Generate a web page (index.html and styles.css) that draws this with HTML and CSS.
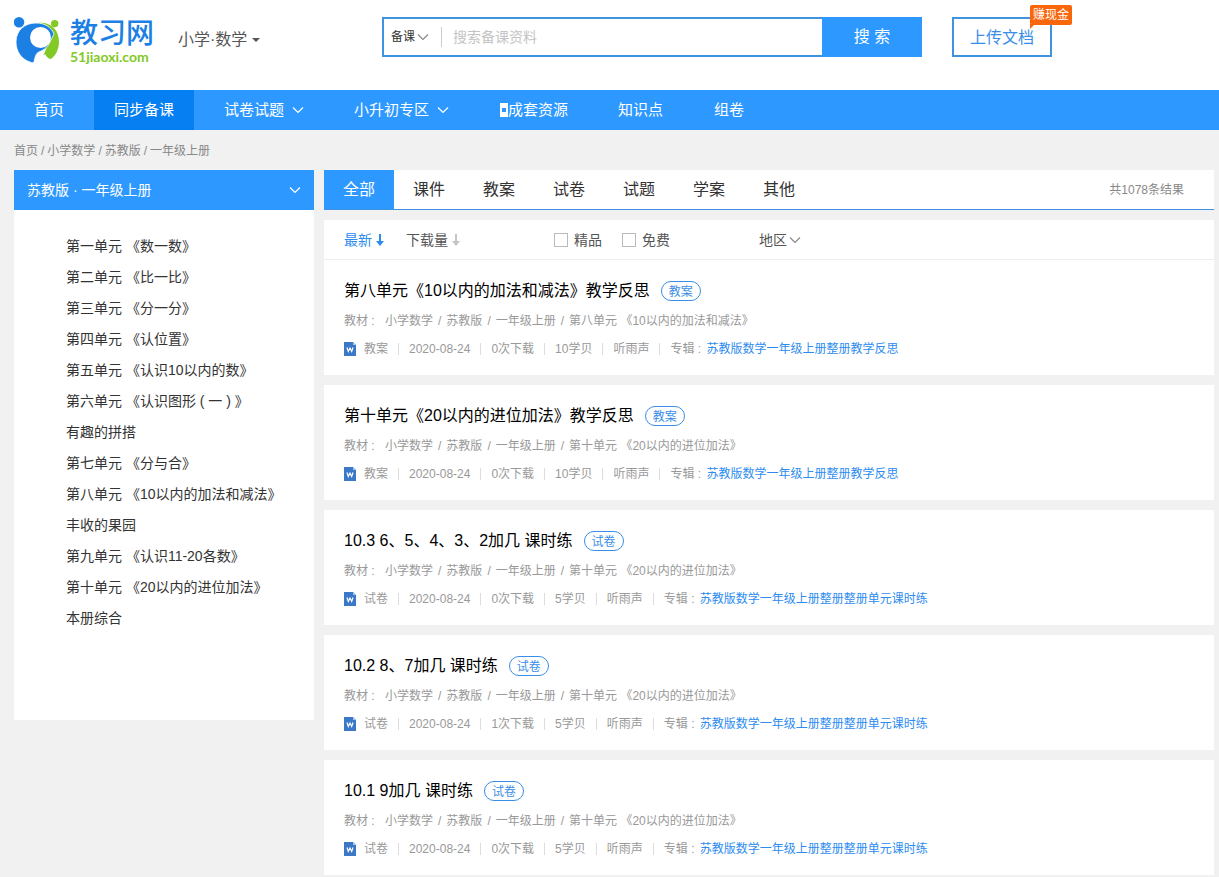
FILE: index.html
```html
<!DOCTYPE html>
<html lang="zh-CN">
<head>
<meta charset="utf-8">
<title>教习网 - 苏教版一年级上册</title>
<meta name="viewport" content="width=device-width, initial-scale=1">
<link rel="stylesheet" href="styles.css">
</head>
<body>
<svg class="defs" aria-hidden="true">
  <symbol id="chevron" viewBox="0 0 12 8"><path d="M1 1.5 6 6.5 11 1.5" fill="none" stroke="currentColor" stroke-width="1.2"/></symbol>
  <symbol id="arrow" viewBox="0 0 8 12"><path d="M3 0h2v7h3L4 12 0 7h3z" fill="currentColor"/></symbol>
  <symbol id="word" viewBox="0 0 12 14"><path d="M0 0h9l3 3v11H0z" fill="#3b78c8"/><path d="M9 0v3h3z" fill="#a9c8ee"/><path d="M3 5.500l1.300 4L6 6l1.700 3.500L9 5.500" fill="none" stroke="#fff" stroke-width="1.200"/></symbol>
</svg>
<header class="header">
  <a class="logo" href="#">
    <svg class="logo-mark" viewBox="0 0 48 48" aria-hidden="true">
      <circle cx="5" cy="5.300" r="5.300" fill="#1b7fe3"/>
      <circle cx="40.700" cy="6.600" r="3.700" fill="#83c926"/>
      <path d="M23 6C36 4 45 12 45 25c0 8-4 14-8 17-3 0-5-3-7-7l-2-5 10-16z" fill="#83c926"/>
      <path d="M2 25C2 13 11 6 22 6c9 0 15 4 18 11l-4 8c-2 5-6 8-11 10-3 1-4 5-5 10-1 1-2 1-4 0C7 42 2 34 2 25z" fill="#1b7fe3" stroke="#fff" stroke-width=".800"/>
      <path d="M37 24c-1 5-4 9-9 11l2 3 6-5z" fill="#83c926"/>
      <path d="M33 30c-2 3-6 4-9 6l6 1z" fill="#fff"/>
      <circle cx="26.500" cy="20.500" r="10.500" fill="#fff"/>
    </svg>
    <span class="logo-text"><span class="logo-name">教习网</span><span class="logo-domain">51jiaoxi.com</span></span>
  </a>
  <button class="subject" type="button">小学·数学<span class="caret"></span></button>
  <form class="search">
    <button class="search-kind" type="button">备课<svg class="chev"><use href="#chevron"/></svg></button>
    <input class="search-input" type="text" placeholder="搜索备课资料" aria-label="搜索备课资料">
    <button class="search-go" type="button">搜 索</button>
  </form>
  <a class="upload" href="#">上传文档<span class="cash">赚现金</span></a>
</header>
<nav class="nav">
  <a class="nav-item nav-home" href="#">首页</a>
  <a class="nav-item nav-on" href="#">同步备课</a>
  <a class="nav-item nav-papers" href="#">试卷试题<svg class="chev"><use href="#chevron"/></svg></a>
  <a class="nav-item nav-zone" href="#">小升初专区<svg class="chev"><use href="#chevron"/></svg></a>
  <a class="nav-item nav-sets" href="#"><span class="glyph"></span>成套资源</a>
  <a class="nav-item nav-points" href="#">知识点</a>
  <a class="nav-item" href="#">组卷</a>
</nav>
<div class="crumbs"><a href="#">首页</a><span>/</span><a href="#">小学数学</a><span>/</span><a href="#">苏教版</a><span>/</span><a href="#">一年级上册</a></div>
<div class="layout">
  <aside class="side">
    <button class="side-head" type="button">苏教版 · 一年级上册<svg class="chev"><use href="#chevron"/></svg></button>
    <ul class="units">
      <li><a href="#">第一单元 《数一数》</a></li>
      <li><a href="#">第二单元 《比一比》</a></li>
      <li><a href="#">第三单元 《分一分》</a></li>
      <li><a href="#">第四单元 《认位置》</a></li>
      <li><a href="#">第五单元 《认识10以内的数》</a></li>
      <li><a href="#">第六单元 《认识图形 ( 一 ) 》</a></li>
      <li><a href="#">有趣的拼搭</a></li>
      <li><a href="#">第七单元 《分与合》</a></li>
      <li><a href="#">第八单元 《10以内的加法和减法》</a></li>
      <li><a href="#">丰收的果园</a></li>
      <li><a href="#">第九单元 《认识11-20各数》</a></li>
      <li><a href="#">第十单元 《20以内的进位加法》</a></li>
      <li><a href="#">本册综合</a></li>
    </ul>
  </aside>
  <main class="main">
    <div class="tabs">
      <a class="tab tab-on" href="#">全部</a><a class="tab" href="#">课件</a><a class="tab" href="#">教案</a><a class="tab" href="#">试卷</a><a class="tab" href="#">试题</a><a class="tab" href="#">学案</a><a class="tab" href="#">其他</a>
      <span class="total">共1078条结果</span>
    </div>
    <div class="filters">
      <button class="sort sort-on" type="button">最新<svg class="arrow"><use href="#arrow"/></svg></button>
      <button class="sort" type="button">下载量<svg class="arrow"><use href="#arrow"/></svg></button>
      <div class="checks">
        <label class="check"><input type="checkbox">精品</label>
        <label class="check"><input type="checkbox">免费</label>
      </div>
      <button class="region" type="button">地区<svg class="chev"><use href="#chevron"/></svg></button>
    </div>
    <article class="card">
      <h2 class="title"><a href="#">第八单元《10以内的加法和减法》教学反思</a><span class="tag">教案</span></h2>
      <p class="path"><span>教材 :</span><span>小学数学</span><i>/</i><span>苏教版</span><i>/</i><span>一年级上册</span><i>/</i><span>第八单元 《10以内的加法和减法》</span></p>
      <div class="meta"><span class="kind"><svg class="doc"><use href="#word"/></svg>教案</span><span>2020-08-24</span><span>0次下载</span><span>10学贝</span><span>听雨声</span><span><span class="album">专辑 :</span><a href="#">苏教版数学一年级上册整册教学反思</a></span></div>
    </article>
    <article class="card">
      <h2 class="title"><a href="#">第十单元《20以内的进位加法》教学反思</a><span class="tag">教案</span></h2>
      <p class="path"><span>教材 :</span><span>小学数学</span><i>/</i><span>苏教版</span><i>/</i><span>一年级上册</span><i>/</i><span>第十单元 《20以内的进位加法》</span></p>
      <div class="meta"><span class="kind"><svg class="doc"><use href="#word"/></svg>教案</span><span>2020-08-24</span><span>0次下载</span><span>10学贝</span><span>听雨声</span><span><span class="album">专辑 :</span><a href="#">苏教版数学一年级上册整册教学反思</a></span></div>
    </article>
    <article class="card">
      <h2 class="title"><a href="#">10.3 6、5、4、3、2加几 课时练</a><span class="tag">试卷</span></h2>
      <p class="path"><span>教材 :</span><span>小学数学</span><i>/</i><span>苏教版</span><i>/</i><span>一年级上册</span><i>/</i><span>第十单元 《20以内的进位加法》</span></p>
      <div class="meta"><span class="kind"><svg class="doc"><use href="#word"/></svg>试卷</span><span>2020-08-24</span><span>0次下载</span><span>5学贝</span><span>听雨声</span><span><span class="album">专辑 :</span><a href="#">苏教版数学一年级上册整册整册单元课时练</a></span></div>
    </article>
    <article class="card">
      <h2 class="title"><a href="#">10.2 8、7加几 课时练</a><span class="tag">试卷</span></h2>
      <p class="path"><span>教材 :</span><span>小学数学</span><i>/</i><span>苏教版</span><i>/</i><span>一年级上册</span><i>/</i><span>第十单元 《20以内的进位加法》</span></p>
      <div class="meta"><span class="kind"><svg class="doc"><use href="#word"/></svg>试卷</span><span>2020-08-24</span><span>1次下载</span><span>5学贝</span><span>听雨声</span><span><span class="album">专辑 :</span><a href="#">苏教版数学一年级上册整册整册单元课时练</a></span></div>
    </article>
    <article class="card">
      <h2 class="title"><a href="#">10.1 9加几 课时练</a><span class="tag">试卷</span></h2>
      <p class="path"><span>教材 :</span><span>小学数学</span><i>/</i><span>苏教版</span><i>/</i><span>一年级上册</span><i>/</i><span>第十单元 《20以内的进位加法》</span></p>
      <div class="meta"><span class="kind"><svg class="doc"><use href="#word"/></svg>试卷</span><span>2020-08-24</span><span>0次下载</span><span>5学贝</span><span>听雨声</span><span><span class="album">专辑 :</span><a href="#">苏教版数学一年级上册整册整册单元课时练</a></span></div>
    </article>
  </main>
</div>
</body>
</html>
```
FILE: styles.css
```css
* { box-sizing: border-box; }
body {
  margin: 0;
  background: #f1f1f1;
  color: #333;
  font: 14px/20px "Liberation Sans", "Noto Sans CJK SC", sans-serif;
}
a { color: inherit; text-decoration: none; }
button { border: 0; padding: 0; background: none; color: inherit; font: inherit; cursor: pointer; }
.defs { display: none; }
.chev { width: 12px; height: 8px; flex: none; }

.header {
  display: flex;
  align-items: flex-start;
  height: 90px;
  padding: 17px 14px 0;
  background: #fff;
}
.logo { display: flex; width: 164px; }
.logo-mark { width: 48px; height: 48px; flex: none; }
.logo-text { display: flex; flex-direction: column; padding-left: 8px; white-space: nowrap; }
.logo-name { color: #1b7fe3; font-size: 28px; font-weight: 500; line-height: 34px; }
.logo-domain { color: #83c926; font: 700 14px/12px Lato, sans-serif; }
.subject {
  display: flex;
  align-items: center;
  gap: 5px;
  width: 204px;
  height: 46px;
  color: #555;
  font-size: 16px;
}
.caret { border: 4px solid transparent; border-top-color: #555; border-bottom: 0; }
.search {
  display: flex;
  flex: 0 1 540px;
  height: 40px;
  border: 2px solid #4192e0;
}
.search-kind {
  display: flex;
  align-items: center;
  flex: none;
  gap: 2px;
  width: 58px;
  height: 20px;
  margin: 8px 0;
  padding-left: 7px;
  border-right: 1px solid #ccc;
  font-size: 12px;
}
.search-kind .chev, .region .chev { color: #888; }
.search-input {
  flex: 1;
  min-width: 0;
  padding: 0 11px;
  border: 0;
  outline: 0;
  background: none;
  font: inherit;
}
.search-input::placeholder { color: #c4c4c4; }
.search-go { flex: none; width: 100px; margin: -2px; background: #2d98ff; color: #fff; font-size: 16px; }
.upload {
  position: relative;
  width: 100px;
  height: 40px;
  margin-left: 30px;
  border: 2px solid #4192e0;
  color: #3a8ee6;
  font-size: 16px;
  line-height: 38px;
  text-align: center;
  white-space: nowrap;
}
.cash {
  position: absolute;
  top: -14px;
  right: -22px;
  width: 42px;
  border-radius: 2px;
  background: #f9660c;
  color: #fff;
  font-size: 12px;
  line-height: 20px;
}
.cash::after {
  content: "";
  position: absolute;
  top: 19px;
  left: 0;
  border-top: 5px solid #f9660c;
  border-right: 5px solid transparent;
}

.nav { display: flex; height: 40px; background: #2d98ff; color: #fff; font-size: 15px; line-height: 40px; white-space: nowrap; }
.nav-item { display: flex; align-items: center; }
.nav-item .chev { margin-left: 8px; }
.nav-home { width: 94px; padding-left: 34px; }
.nav-on { width: 100px; justify-content: center; background: #067ff2; }
.nav-papers { width: 160px; padding-left: 30px; }
.nav-zone { width: 146px; }
.nav-sets { width: 118px; }
.nav-points { width: 96px; }
.glyph { width: 8px; height: 14px; border: solid #fff; border-width: 5px 2px; }

.crumbs { display: flex; gap: 3px; padding: 11px 14px 9px; color: #888; font-size: 12px; }
.layout { display: flex; align-items: flex-start; gap: 10px; padding: 0 5px 0 14px; }
.side { flex: 0 0 300px; background: #fff; }
.side-head {
  display: flex;
  align-items: center;
  justify-content: space-between;
  width: 100%;
  height: 40px;
  padding: 0 13px;
  background: #2d98ff;
  color: #fff;
}
.units { min-height: 510px; margin: 0; padding: 21px 0 0 52px; list-style: none; line-height: 31px; }

.main { flex: 1; min-width: 0; }
.tabs { display: flex; height: 40px; border-bottom: 1px solid #4192e0; background: #fff; font-size: 16px; line-height: 39px; }
.tab { width: 70px; text-align: center; }
.tab-on { background: #2d98ff; color: #fff; }
.total { margin-left: auto; padding-right: 30px; color: #888; font-size: 12px; line-height: 40px; }
.filters {
  display: flex;
  align-items: center;
  height: 40px;
  margin-top: 10px;
  padding-left: 20px;
  border-bottom: 1px solid #eee;
  background: #fff;
  color: #555;
}
.sort { display: flex; align-items: center; gap: 4px; margin-right: 22px; }
.sort-on { color: #2d8cf0; }
.arrow { width: 8px; height: 12px; color: #c4c4c4; }
.sort-on .arrow { color: #2d8cf0; }
.checks { display: flex; gap: 20px; width: 205px; margin-left: 72px; }
.check { display: flex; align-items: center; gap: 6px; }
.check input { appearance: none; width: 14px; height: 14px; margin: 0; border: 1px solid #bbb; background: #fff; }
.region { display: flex; align-items: center; gap: 2px; }

.card { padding: 20px 20px 15px; background: #fff; }
.card + .card { margin-top: 10px; }
.title { display: flex; align-items: center; gap: 11px; margin: 0; color: #000; font-size: 16px; font-weight: 400; line-height: 22px; }
.tag {
  width: 40px;
  height: 20px;
  border: 1px solid #3a8ee6;
  border-radius: 10px;
  color: #3a8ee6;
  font-size: 12px;
  line-height: 20px;
  text-align: center;
}
.path { display: flex; gap: 5px; margin: 9px 0 8px; color: #999; font-size: 12px; }
.path i { font-style: normal; }
.path span:first-child { width: 36px; }
.album { width: 36px; }
.meta { display: flex; align-items: center; height: 20px; margin-bottom: 1px; color: #999; font-size: 12px; }
.meta > span { display: flex; align-items: center; }
.meta > span + span::before { content: ""; width: 1px; height: 12px; margin: 0 10px; background: #ddd; }
.meta a { color: #2d8cf0; }
.doc { width: 12px; height: 14px; margin-right: 8px; }
```
